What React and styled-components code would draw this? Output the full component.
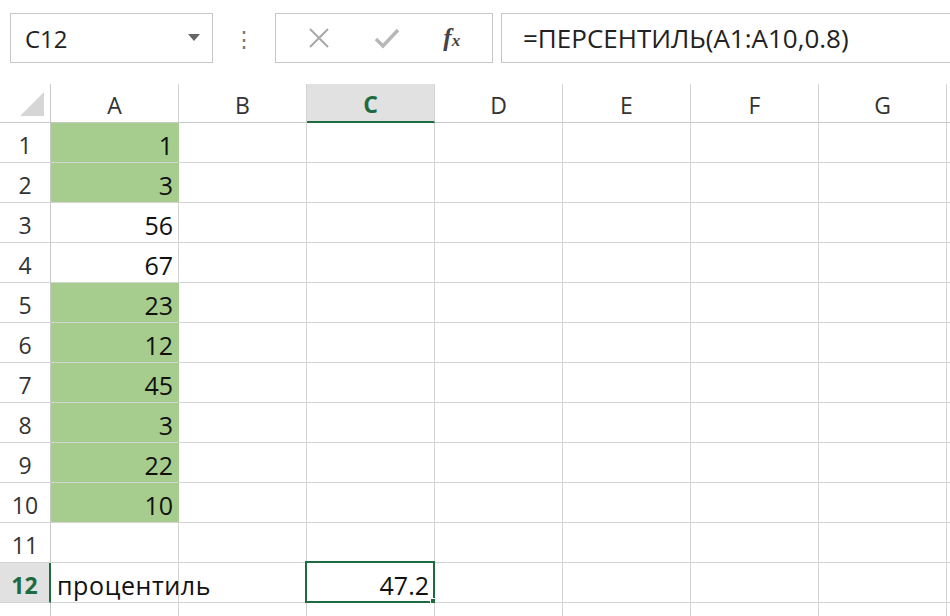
import styled, { createGlobalStyle } from "styled-components";

const Global = createGlobalStyle`
  body {
    margin: 0;
    background: #ffffff;
    font-family: "Open Sans", "Noto Sans", sans-serif;
  }
`;

const Page = styled.div`
  width: 950px;
  height: 616px;
  overflow: hidden;
  background: #ffffff;
`;

const Toolbar = styled.div`
  display: flex;
  align-items: center;
  height: 84px;
  padding: 0 0 8px 10px;
  box-sizing: border-box;
`;

const Box = styled.div`
  height: 50px;
  box-sizing: border-box;
  border: 1px solid #c6c6c6;
  display: flex;
  align-items: center;
  background: #fff;
`;

const NameBox = styled(Box)`
  width: 203px;
  padding: 0 12px 0 14px;
  justify-content: space-between;
  font-size: 24px;
  color: #222;
`;

const Dots = styled.div`
  width: 62px;
  display: flex;
  justify-content: center;
  color: #777;
  font-size: 22px;
`;

const Buttons = styled(Box)`
  width: 218px;
  justify-content: space-around;
  padding: 0 10px;
`;

const FormulaBox = styled(Box)`
  flex: 1;
  margin-left: 8px;
  border-right: none;
  padding-left: 21px;
  font-size: 26px;
  color: #222;
  white-space: nowrap;
`;

const Fx = styled.span`
  font-family: "Liberation Serif", serif;
  font-style: italic;
  font-size: 25px;
  color: #444;
  font-weight: bold;
`;

const FxSub = styled.span`
  font-size: 17px;
`;

const Grid = styled.div`
  display: grid;
  grid-template-columns: 51px repeat(8, 128px);
  grid-template-rows: 39px repeat(13, 40px);
`;

const Cell = styled.div`
  box-sizing: border-box;
  border-right: 1px solid ${(p) => (p.$fill ? "#a6cd8d" : "#d4d4d4")};
  border-bottom: 1px solid #d4d4d4;
  display: flex;
  align-items: center;
  justify-content: ${(p) => (p.$left ? "flex-start" : "flex-end")};
  padding: 4px 5px 0 6px;
  font-size: 25px;
  color: #111;
  background: ${(p) => (p.$fill ? "#a6cd8d" : "#fff")};
  position: relative;
  white-space: nowrap;
  z-index: ${(p) => (p.$left ? 1 : 0)};
`;

const Label = styled.span`
  letter-spacing: 0.6px;
`;

const Active = styled(Cell)`
  &::before {
    content: "";
    position: absolute;
    inset: -2px -1px -1px -2px;
    border: 2px solid #1f6b40;
    pointer-events: none;
  }
  &::after {
    content: "";
    position: absolute;
    right: -5px;
    bottom: -5px;
    width: 7px;
    height: 7px;
    background: #1f6b40;
    border: 1px solid #fff;
  }
`;

const ColHead = styled.div`
  box-sizing: border-box;
  border-right: 1px solid #d4d4d4;
  border-bottom: ${(p) => (p.$sel ? "2px solid #1f6b40" : "1px solid #c8c8c8")};
  background: ${(p) => (p.$sel ? "#e1e1e1" : "#fff")};
  color: ${(p) => (p.$sel ? "#1f6b40" : "#333")};
  font-weight: ${(p) => (p.$sel ? 700 : 400)};
  font-size: 23px;
  padding-top: 3px;
  display: flex;
  align-items: center;
  justify-content: center;
`;

const RowHead = styled.div`
  box-sizing: border-box;
  border-right: ${(p) => (p.$sel ? "2px solid #1f6b40" : "1px solid #c8c8c8")};
  border-bottom: 1px solid #d4d4d4;
  background: ${(p) => (p.$sel ? "#e1e1e1" : "#fff")};
  color: ${(p) => (p.$sel ? "#1f6b40" : "#333")};
  font-weight: ${(p) => (p.$sel ? 700 : 400)};
  font-size: 23px;
  padding-top: 4px;
  display: flex;
  align-items: center;
  justify-content: center;
`;

const Corner = styled.div`
  box-sizing: border-box;
  border-right: 1px solid #c8c8c8;
  border-bottom: 1px solid #c8c8c8;
  display: flex;
  align-items: flex-end;
  justify-content: flex-end;
  padding: 0 6px 6px 0;
`;

const cols = ["A", "B", "C", "D", "E", "F", "G", "H"];
const aValues = [1, 3, 56, 67, 23, 12, 45, 3, 22, 10];
const filled = [true, true, false, false, true, true, true, true, true, true];

function Row({ n }) {
  const cells = [];
  for (let c = 0; c < cols.length; c++) {
    const key = cols[c] + n;
    if (c === 0 && n <= 10) {
      cells.push(
        <Cell key={key} $fill={filled[n - 1]}>
          {aValues[n - 1]}
        </Cell>
      );
    } else if (c === 0 && n === 12) {
      cells.push(
        <Cell key={key} $left>
          <Label>процентиль</Label>
        </Cell>
      );
    } else if (c === 2 && n === 12) {
      cells.push(<Active key={key}>47.2</Active>);
    } else {
      cells.push(<Cell key={key} />);
    }
  }
  return (
    <>
      <RowHead $sel={n === 12}>{n <= 12 ? n : ""}</RowHead>
      {cells}
    </>
  );
}

export default function App() {
  const rows = Array.from({ length: 13 }, (_, i) => i + 1);
  return (
    <Page>
      <Global />
      <Toolbar>
        <NameBox>
          <span>C12</span>
          <svg width="12" height="8" viewBox="0 0 12 8">
            <path d="M0 0 L12 0 L6 7 Z" fill="#666" />
          </svg>
        </NameBox>
        <Dots>⋮</Dots>
        <Buttons>
          <svg width="22" height="22" viewBox="0 0 22 22">
            <path d="M2 2 L20 20 M20 2 L2 20" stroke="#a8a8a8" strokeWidth="2" />
          </svg>
          <svg width="26" height="22" viewBox="0 0 26 22">
            <path d="M2 12 L9 19 L24 3" stroke="#b8b8b8" strokeWidth="3.5" fill="none" />
          </svg>
          <Fx>
            f<FxSub>x</FxSub>
          </Fx>
        </Buttons>
        <FormulaBox>=ПЕРСЕНТИЛЬ(A1:A10,0.8)</FormulaBox>
      </Toolbar>
      <Grid>
        <Corner>
          <svg width="24" height="24" viewBox="0 0 24 24">
            <path d="M24 0 L24 24 L0 24 Z" fill="#d6d6d6" />
          </svg>
        </Corner>
        {cols.map((c) => (
          <ColHead key={c} $sel={c === "C"}>
            {c === "H" ? "" : c}
          </ColHead>
        ))}
        {rows.map((n) => (
          <Row key={n} n={n} />
        ))}
      </Grid>
    </Page>
  );
}
